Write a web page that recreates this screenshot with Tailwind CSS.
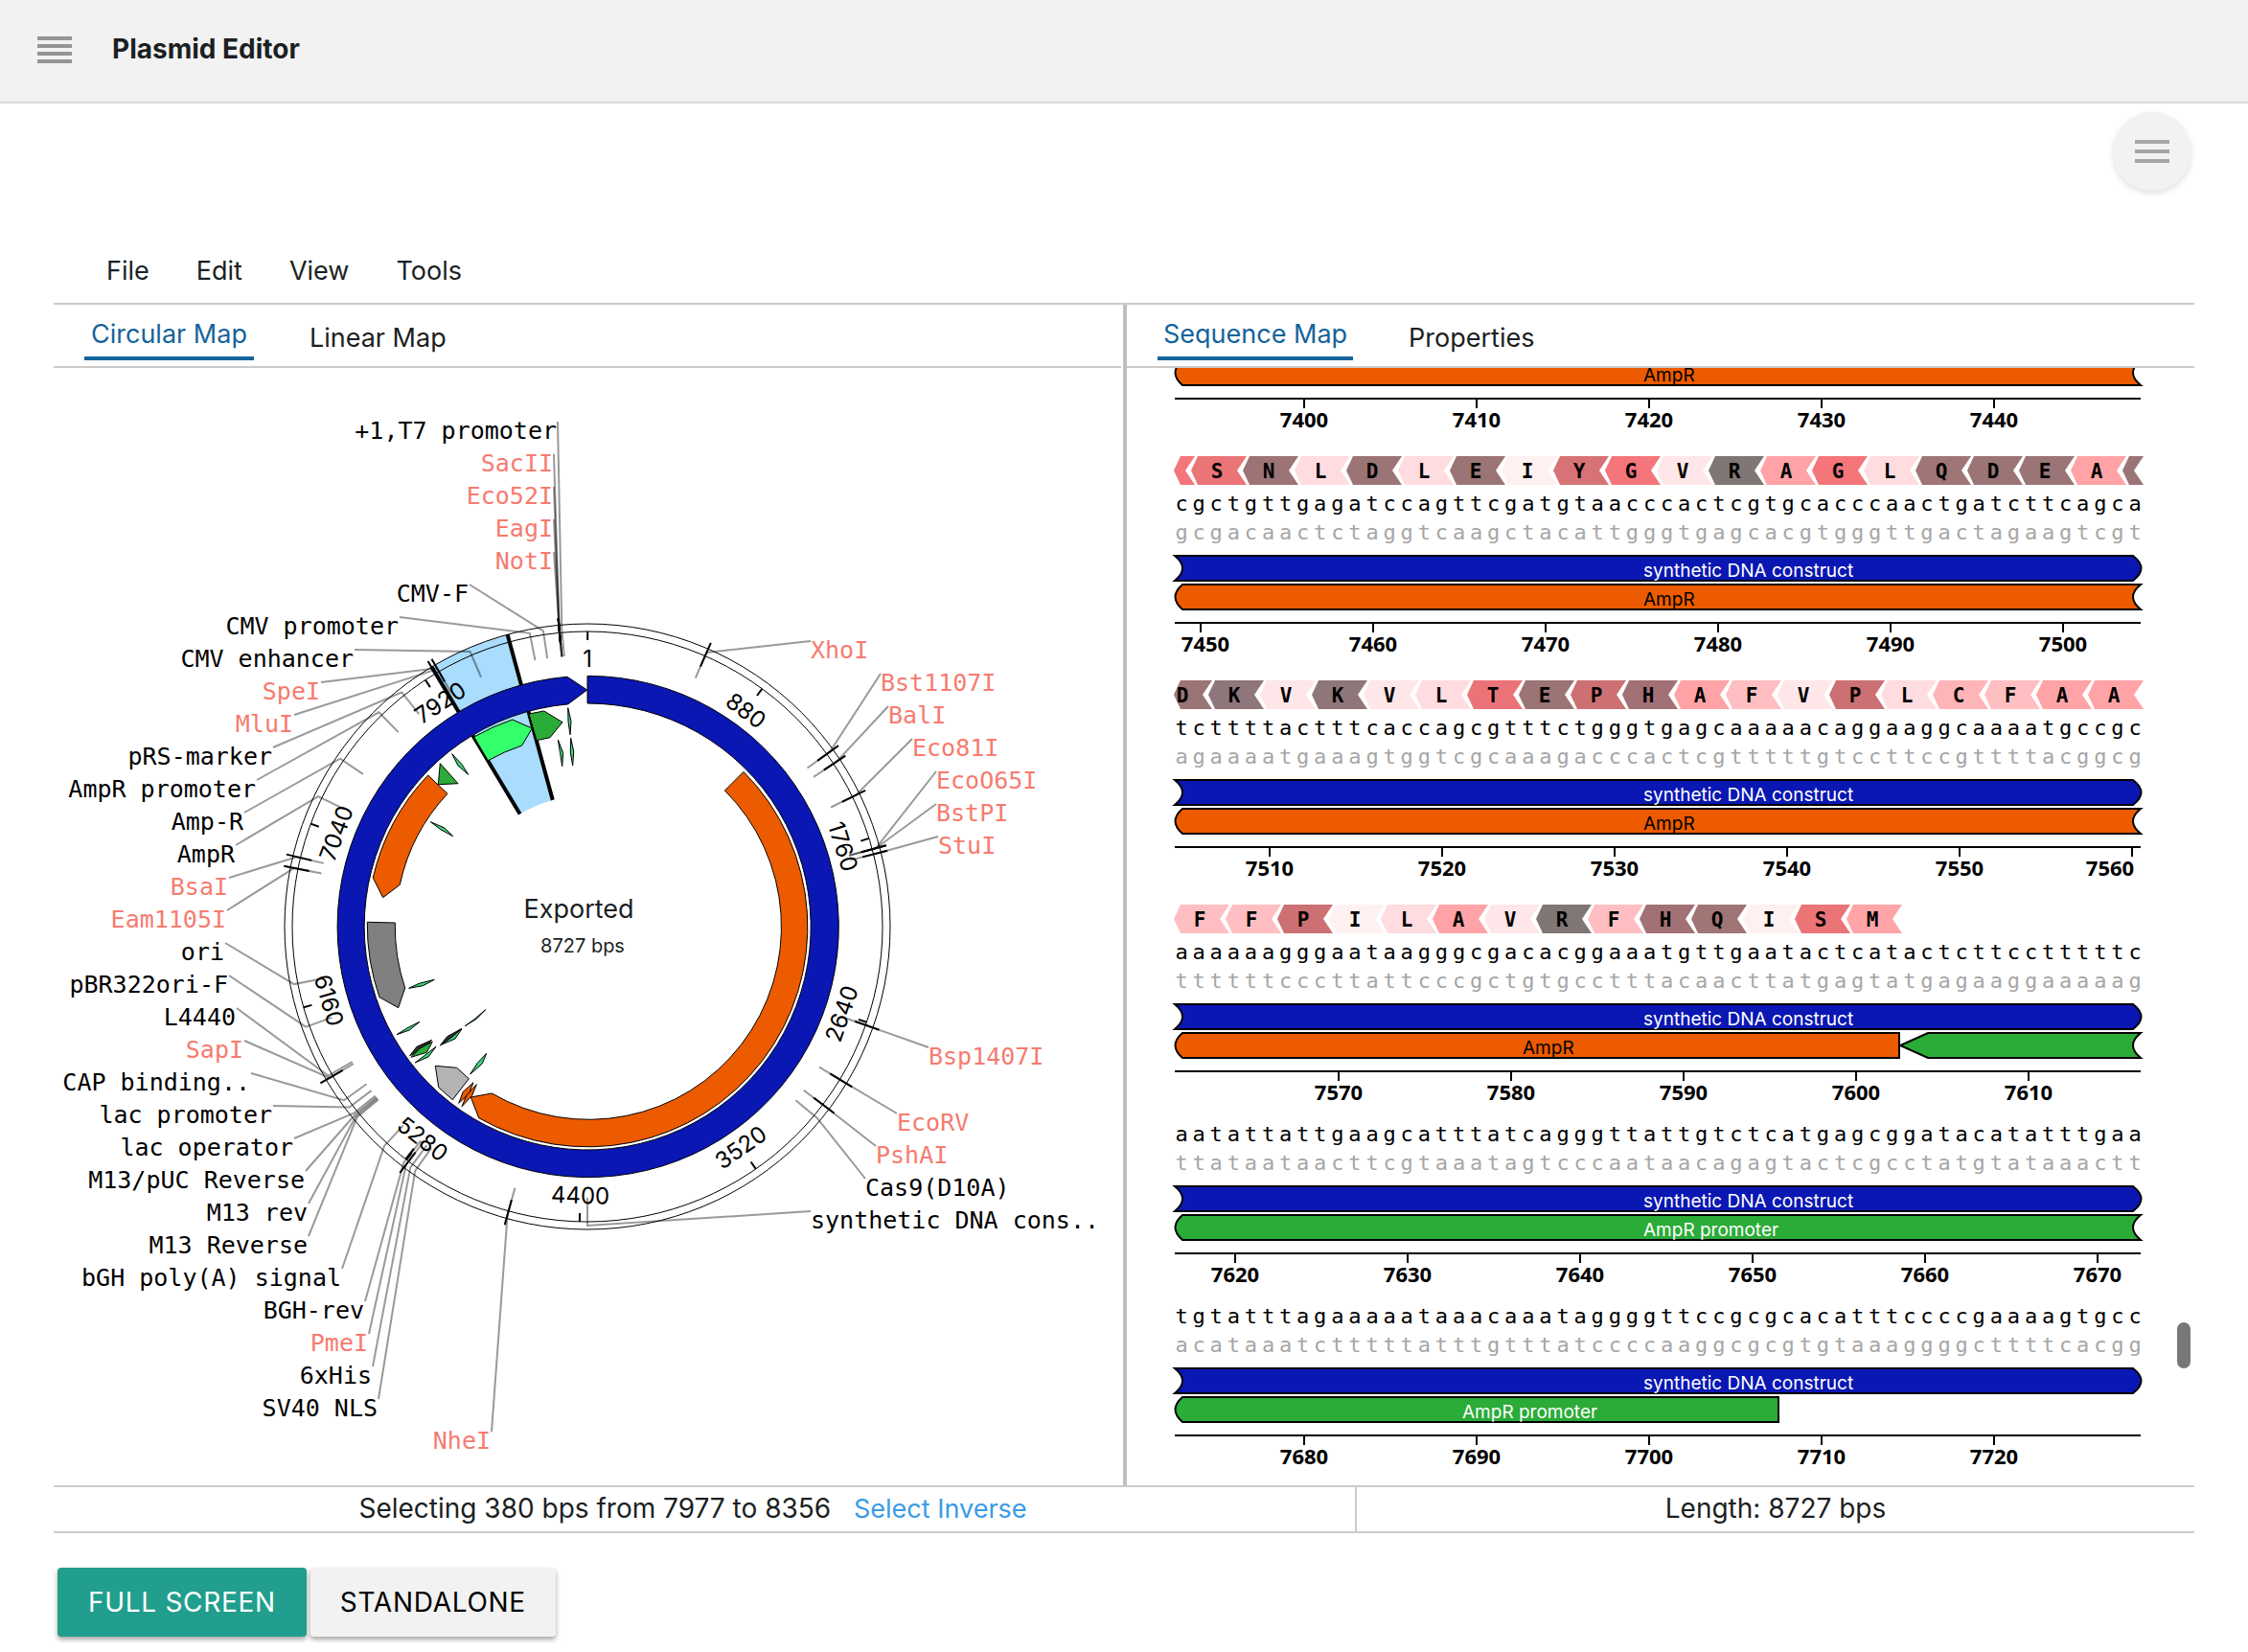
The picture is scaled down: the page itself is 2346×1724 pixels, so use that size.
<!DOCTYPE html>
<html lang="en">
<head>
  <meta charset="UTF-8">
  <meta name="viewport" content="width=device-width, initial-scale=1.0">
  <script src="https://cdn.jsdelivr.net/npm/@tailwindcss/browser@4"></script>
  <title>Plasmid Editor</title>
</head>
<body class="bg-white text-[#1b1f23] text-[27px] leading-[34px] font-['Inter','Liberation_Sans',sans-serif]">
  <header class="flex items-center gap-[42px] h-27 pl-[39px] bg-[#f2f2f2] border-b-2 border-[#d9d9d9]">
    <button type="button" aria-label="Toggle navigation" class="pb-0.5">
      <svg class="block w-9 h-7" viewBox="0 0 36 28" fill="#949494">
        <rect width="36" height="4"/><rect y="8" width="36" height="4"/><rect y="16" width="36" height="4"/><rect y="24" width="36" height="4"/>
      </svg>
    </button>
    <h1 class="text-[28px] font-bold pb-1">Plasmid Editor</h1>
  </header>

  <main class="px-14 pb-4">
    <div class="flex justify-end pt-[9px] pr-[3px]">
      <button type="button" aria-label="Open menu" class="flex items-center justify-center size-[82px] rounded-full bg-[#f2f2f2] shadow-[0_3px_6px_rgba(0,0,0,0.12)]">
        <svg class="w-9 h-6" viewBox="0 0 36 24" fill="#a6a6a6">
          <rect width="36" height="4"/><rect y="10" width="36" height="4"/><rect y="20" width="36" height="4"/>
        </svg>
      </button>
    </div>

    <nav class="flex gap-[49px] pt-[67px] pb-4 pl-[55px]">
      <button type="button">File</button>
      <button type="button">Edit</button>
      <button type="button">View</button>
      <button type="button">Tools</button>
    </nav>

    <!-- Editor panels -->
    <div class="flex border-y-2 border-[#cbcbcb]">
      <section class="flex flex-col flex-1 min-w-0">
        <div class="flex items-start gap-[58px] h-[66px] pt-[14px] pl-8 border-b-2 border-[#cbcbcb]">
          <button type="button" class="px-[7px] pb-[6px] border-b-4 border-[#14639b] text-[#14639b]">Circular Map</button>
          <button type="button" class="mt-1">Linear Map</button>
        </div>
        <svg id="circular" class="block w-full font-['DejaVu_Sans_Mono','Liberation_Mono',monospace]" viewBox="56 384 1114 1166" font-size="25"></svg>
      </section>

      <div class="w-1 ml-0.5 bg-[#bfbfbf]"></div>

      <section class="relative flex flex-col flex-1 min-w-0">
        <div class="flex items-start gap-[58px] h-[66px] pt-[14px] pl-8 border-b-2 border-[#cbcbcb]">
          <button type="button" class="px-[6px] pb-[6px] border-b-4 border-[#14639b] text-[#14639b]">Sequence Map</button>
          <button type="button" class="mt-1">Properties</button>
        </div>
        <div id="sequence" class="flex flex-col justify-end h-0 grow pb-[6px] overflow-hidden"></div>
        <div class="absolute right-1 bottom-[122px] w-[14px] h-12 rounded-full bg-[#777777]"></div>
      </section>
    </div>

    <div class="grid grid-cols-[1358fr_876fr] h-12 text-center text-[28px] border-b-2 border-[#cbcbcb]">
      <div class="pt-[5px] pr-6">
        Selecting 380 bps from 7977 to 8356
        <a href="#" class="ml-4 text-[27px] text-[#3a9be6]">Select Inverse</a>
      </div>
      <div class="pt-[5px] border-l-2 border-[#cbcbcb]">Length: 8727 bps</div>
    </div>

    <div class="flex gap-1 pt-9 pl-1 text-[28px]">
      <button type="button" class="h-18 px-8 rounded-sm bg-[#219e8d] text-white tracking-wide shadow-[0_3px_5px_rgba(0,0,0,0.35)]">FULL SCREEN</button>
      <button type="button" class="h-18 px-[31px] rounded-sm bg-[#f2f2f2] text-black tracking-wide shadow-[0_3px_5px_rgba(0,0,0,0.35)]">STANDALONE</button>
    </div>
  </main>

  <script>
    // ---------- Circular map ----------
    const CX = 613, CY = 967, TOTAL = 8727;

    function polar(deg, r) {
      const a = deg * Math.PI / 180;
      return (CX + r * Math.sin(a)).toFixed(1) + ' ' + (CY - r * Math.cos(a)).toFixed(1);
    }

    function bpAngle(bp) {
      return bp / TOTAL * 360;
    }

    const labelHeight = 34;
    const CUT = '#f67b6f', FEATURE = '#000';

    // [text, angle, x of the text edge, colour]
    const leftLabels = [
      ['+1,T7 promoter', -4.9, 581, FEATURE],
      ['SacII', -5.4, 577, CUT],
      ['Eco52I', -5.4, 577, CUT],
      ['EagI', -5.4, 577, CUT],
      ['NotI', -5.4, 577, CUT],
      ['CMV-F', -8.5, 489, FEATURE],
      ['CMV promoter', -11.1, 416, FEATURE],
      ['CMV enhancer', -23.1, 369, FEATURE],
      ['SpeI', -30.2, 334, CUT],
      ['MluI', -31, 306, CUT],
      ['pRS-marker', -38.4, 284, FEATURE],
      ['AmpR promoter', -44.2, 267, FEATURE],
      ['Amp-R', -55.8, 254, FEATURE],
      ['AmpR', -64.2, 245, FEATURE],
      ['BsaI', -76.5, 238, CUT],
      ['Eam1105I', -78.7, 236, CUT],
      ['ori', -101.1, 234, FEATURE],
      ['pBR322ori-F', -109.6, 238, FEATURE],
      ['L4440', -119.9, 246, FEATURE],
      ['SapI', -120.4, 254, CUT],
      ['CAP binding..', -125.5, 261, FEATURE],
      ['lac promoter', -127.2, 284, FEATURE],
      ['lac operator', -128.6, 306, FEATURE],
      ['M13/pUC Reverse', -129, 318, FEATURE],
      ['M13 rev', -129.3, 321, FEATURE],
      ['M13 Reverse', -129.6, 321, FEATURE],
      ['bGH poly(A) signal', -137.2, 356, FEATURE],
      ['BGH-rev', -142.1, 380, FEATURE],
      ['PmeI', -142.7, 384, CUT],
      ['6xHis', -143.7, 388, FEATURE],
      ['SV40 NLS', -144.8, 394, FEATURE],
      ['NheI', -164.5, 512, CUT]
    ];
    const rightLabels = [
      ['XhoI', 23.5, 846, 687, CUT],
      ['Bst1107I', 54.2, 919, 721, CUT],
      ['BalI', 56.5, 927, 755, CUT],
      ['Eco81I', 63.9, 952, 789, CUT],
      ['EcoO65I', 74.8, 977, 823, CUT],
      ['BstPI', 74.8, 977, 857, CUT],
      ['StuI', 75.8, 979, 891, CUT],
      ['Bsp1407I', 109.5, 969, 1111, CUT],
      ['EcoRV', 121.2, 936, 1180, CUT],
      ['PshAI', 127.1, 914, 1214, CUT],
      ['Cas9(D10A)', 129.8, 903, 1248, FEATURE],
      ['synthetic DNA cons..', 180, 846, 1282, FEATURE]
    ];

    let leaders = '', cuts = '', labels = '';

    function addLabel(text, angle, x, y, color, side) {
      const lx = side === 'end' ? x + 1 : x;
      leaders += `<path d="M${lx} ${y - 18}L${polar(angle, 312)}L${polar(angle, 283)}"/>`;
      if (color === CUT) cuts += `<path d="M${polar(angle, 323)}L${polar(angle, 296)}"/>`;
      labels += `<text x="${x}" y="${y}" text-anchor="${side}" fill="${color}">${text}</text>`;
    }
    leftLabels.forEach(([text, angle, x, color], i) => addLabel(text, angle, x, 458 + i * labelHeight, color, 'end'));
    rightLabels.forEach(([text, angle, x, y, color]) => addLabel(text, angle, x, y, color, 'start'));

    let ticks = '', tickLabels = '';
    [1, 880, 1760, 2640, 3520, 4400, 5280, 6160, 7040, 7920].forEach(bp => {
      const a = bpAngle(bp);
      const [x, y] = polar(a, 280).split(' ');
      const turn = a > 90 && a < 270 ? a - 180 : a;
      ticks += `<path d="M${polar(a, 308)}L${polar(a, 299)}"/>`;
      tickLabels += `<text transform="translate(${x} ${y}) rotate(${turn.toFixed(1)})" y="9" text-anchor="middle">${bp}</text>`;
    });

    const selFrom = bpAngle(7977), selTo = bpAngle(8356);

    // Short annotations on the inner tracks
    const slivers = [
      ['#3fd17a', '592.7 738.7 596 752.7 595 766.7 593 753.3'],
      ['#3fd17a', '582.3 772 587.7 785.7 586.7 799.7 584.7 786.7'],
      ['#3fd17a', '595.7 770.3 598.7 784 597.7 799 595.3 785.3'],
      ['#3fd17a', '471.7 786.7 481.7 797.3 488.7 808.3 478 799'],
      ['#3fd17a', '449.3 857.7 464 864 472.7 872.7 459.3 865.3'],
      ['#3fd17a', '426.7 1031.3 437.3 1026.3 453.3 1022.3 441.3 1028.7'],
      ['#3fd17a', '414 1079.7 424.7 1073 438 1066.3 427.3 1075'],
      ['#2b2f33', '427.7 1101.7 435 1092.3 450.7 1085.3 441.7 1094.3'],
      ['#2bab38', '429 1103.3 438.3 1094 451.3 1087 445.3 1098.3'],
      ['#3fd17a', '433.3 1109 445 1100 455 1092.3 447.3 1102.7'],
      ['#3fd17a', '461 1090 473 1080 481.7 1074 475 1084'],
      ['#2b2f33', '459.3 1091 466.7 1081.7 482 1073.3 472 1082'],
      ['#3fd17a', '485.3 1070.7 494.3 1064.3 506.7 1053.7 497.3 1063.3'],
      ['#3fd17a', '490.7 1121 498.3 1109.3 507.7 1099.3 503.3 1110'],
      ['#ec5b00', '478.7 1151.3 483.3 1139.3 494 1129.7 489.3 1141.7'],
      ['#ec5b00', '482 1154.7 486.7 1143.3 497.3 1131.7 492.7 1143.3']
    ];

    document.getElementById('circular').innerHTML = `
      <path fill="#a9dcfd" d="M${polar(selFrom, 316)}A316 316 0 0 1 ${polar(selTo, 316)}L${polar(selTo, 137)}A137 137 0 0 0 ${polar(selFrom, 137)}Z"/>
      <g fill="none" stroke="#000">
        <circle cx="${CX}" cy="${CY}" r="316"/>
        <circle cx="${CX}" cy="${CY}" r="308"/>
      </g>
      <g stroke="#000" stroke-width="2">${ticks}</g>
      <g fill="none" stroke="#000" stroke-opacity="0.4" stroke-width="2">${leaders}</g>
      <g class="font-['Inter','Liberation_Sans',sans-serif]" font-size="24">${tickLabels}</g>
      <g stroke="#000" stroke-width="2">${cuts}<path d="M${polar(-142, 308)}L${polar(-142, 294)}"/></g>
      <g stroke="#000" stroke-width="4">
        <path d="M${polar(selFrom, 316)}L${polar(selFrom, 137)}"/>
        <path d="M${polar(selTo, 316)}L${polar(selTo, 137)}"/>
      </g>
      <g stroke="#000">
        <path fill="#0a17b3" d="M613 705.4A261.6 261.6 0 1 1 592 706.3L612.7 720L592.7 734.9A233 233 0 1 0 613 734Z"/>
        <path fill="#ec5b00" d="M776 805.4A229.5 229.5 0 0 1 499.7 1166.7L491.3 1145L513.3 1141A201 201 0 0 0 756.4 825Z"/>
        <path fill="#ec5b00" d="M446.7 809A229.5 229.5 0 0 0 389.3 916L399.7 936.7L417.3 923.3A201 201 0 0 1 467 828.3Z"/>
        <path fill="#808080" d="M383.3 962.3A229.5 229.5 0 0 0 396 1040.7L415.7 1051.7L422.7 1031A201 201 0 0 1 412.3 963Z"/>
        <path fill="#b3b3b3" d="M454.3 1112.3L476.7 1114.3L489.3 1125.7L472.3 1147.7L457.7 1134.7Z"/>
        <path fill="#2bab38" d="M459.3 796.7L478 817.7L457.3 818.7Z"/>
        <path fill="#33ff6b" d="M494.7 769A229.5 229.5 0 0 1 534.7 751L555.3 760L544.7 778A201 201 0 0 0 509.3 793.7Z"/>
        <path fill="#2bab38" d="M552 745L567.7 742L587 753.7L574 769.7L560 772.7Z"/>
        ${slivers.map(([fill, points]) => `<polygon fill="${fill}" points="${points}"/>`).join('')}
      </g>
      ${labels}
      <g class="font-['Inter','Liberation_Sans',sans-serif]" text-anchor="middle" fill="#1b1f23">
        <text x="604" y="958" font-size="27">Exported</text>
        <text x="608" y="994" font-size="20">8727 bps</text>
      </g>`;

    // ---------- Sequence map ----------
    const CHAR = 18, PER_ROW = 56, LEFT = 50, RIGHT = LEFT + CHAR * PER_ROW;
    const pair = { a: 't', t: 'a', g: 'c', c: 'g' };
    const aaColors = {
      A: '#ffa3a7', C: '#ffb5b8', D: '#9b7475', E: '#9b7475', F: '#ffbfc2', G: '#f4767b', H: '#a27175',
      I: '#fff0f1', K: '#8f767a', L: '#ffdcdf', M: '#ffa5a8', N: '#9c7476', P: '#cc7073', Q: '#a07576',
      R: '#7f7675', S: '#eb7477', T: '#eb7377', V: '#ffe6e9', Y: '#d77376'
    };
    const ORANGE = '#ec5b00', GREEN = '#2bab38';

    // aaShift: how many bases of the first codon stand on the row before
    const rows = [
      { start: 7393, bars: [{ name: 'AmpR', fill: ORANGE, text: '#000', tx: 539 }] },
      { start: 7449, seq: 'cgctgttgagatccagttcgatgtaacccactcgtgcacccaactgatcttcagca', aa: 'GSNLDLEIYGVRAGLQDEAD', aaShift: 2,
        bars: [{ name: 'AmpR', fill: ORANGE, text: '#000', tx: 539 }] },
      { start: 7505, seq: 'tcttttactttcaccagcgtttctgggtgagcaaaaacaggaaggcaaaatgccgc', aa: 'DKVKVLTEPHAFVPLCFAA', aaShift: 1,
        bars: [{ name: 'AmpR', fill: ORANGE, text: '#000', tx: 539 }] },
      { start: 7561, seq: 'aaaaaagggaataagggcgacacggaaatgttgaatactcatactcttcctttttc', aa: 'FFPILAVRFHQISM', aaShift: 0,
        bars: [{ name: 'AmpR', fill: ORANGE, text: '#000', tx: 413, to: 42 }, { name: '', fill: GREEN, from: 42 }] },
      { start: 7617, seq: 'aatattattgaagcatttatcagggttattgtctcatgagcggatacatatttgaa',
        bars: [{ name: 'AmpR promoter', fill: GREEN, text: '#fff', tx: 539 }] },
      { start: 7673, seq: 'tgtatttagaaaaataaacaaataggggttccgcgcacatttccccgaaaagtgcc',
        bars: [{ name: 'AmpR promoter', fill: GREEN, text: '#fff', tx: 350, to: 35 }] }
    ];

    function strand(seq, y, fill) {
      const step = (RIGHT - LEFT - 13) / (PER_ROW - 1);
      const xs = [...seq].map((c, i) => (LEFT + 7 + i * step).toFixed(1)).join(' ');
      return `<text x="${xs}" y="${y}" fill="${fill}" text-anchor="middle" font-size="22">${seq}</text>`;
    }

    function aminoAcids(row, y) {
      return [...row.aa].map((letter, i) => {
        const cell = LEFT + (i * 3 - row.aaShift) * CHAR;
        const from = Math.max(cell, LEFT), to = Math.min(cell + 3 * CHAR, RIGHT);
        const shape = `<path fill="${aaColors[letter]}" d="M${from - 1} ${y + 15}L${from + 6} ${y}H${to + 3}L${to - 7} ${y + 15}L${to + 3} ${y + 30}H${from + 6}Z"/>`;
        if (to - from < 2 * CHAR) return shape;
        return shape + `<text x="${cell + 26}" y="${y + 23}" text-anchor="middle" font-size="21" font-weight="700">${letter}</text>`;
      }).join('');
    }

    function syntheticBar(y) {
      return `<path fill="#0a17b3" stroke="#000" stroke-width="2" d="M${LEFT} ${y}H${RIGHT - 8}Q${RIGHT + 9} ${y + 13} ${RIGHT - 8} ${y + 26}H${LEFT}Q${LEFT + 16} ${y + 13} ${LEFT} ${y}Z"/>
        <text x="539" y="${y + 22}" fill="#fff" class="font-['Inter','Liberation_Sans',sans-serif]" font-size="19">synthetic DNA construct</text>`;
    }

    // Bar of a feature on the reverse strand, pointing left
    function bar(b, y) {
      const x2 = LEFT + (b.to || 0) * CHAR;
      const right = b.to ? `H${x2}V${y + 26}` : `H${RIGHT}Q${RIGHT - 16} ${y + 13} ${RIGHT} ${y + 26}`;
      const x1 = LEFT + (b.from || 0) * CHAR;
      const left = b.from
        ? `M${x1 + 30} ${y}${right}H${x1 + 30}L${x1 + 1} ${y + 13}Z`
        : `M${x1 + 8} ${y}${right}H${x1 + 8}Q${x1 - 7} ${y + 13} ${x1 + 8} ${y}Z`;
      return `<path fill="${b.fill}" stroke="#000" stroke-width="2" d="${left}"/>` +
        (b.name ? `<text x="${b.tx}" y="${y + 22}" fill="${b.text}" class="font-['Inter','Liberation_Sans',sans-serif]" font-size="19">${b.name}</text>` : '');
    }

    function axis(row, y) {
      let out = `<path stroke="#000" stroke-width="2" d="M${LEFT} ${y}H${RIGHT}"/>`;
      for (let bp = Math.ceil(row.start / 10) * 10; bp < row.start + PER_ROW; bp += 10) {
        const x = LEFT + (bp - row.start + 0.5) * CHAR;
        const tx = Math.min(Math.max(x, LEFT + 32), RIGHT - 32);
        out += `<path stroke="#000" stroke-width="2" d="M${x} ${y}v10"/>` +
          `<text x="${tx}" y="${y + 30}" text-anchor="middle" font-size="22" font-weight="700" class="font-['Noto_Sans','Open_Sans',sans-serif]">${bp}</text>`;
      }
      return out;
    }

    document.getElementById('sequence').innerHTML = rows.map(row => {
      const h = row.aa ? 234 : 190;
      const a = h - 46;
      return `<svg class="block w-full shrink-0 font-['DejaVu_Sans_Mono','Liberation_Mono',monospace]" viewBox="0 0 1114 ${h}">
        ${row.aa ? aminoAcids(row, a - 174) : ''}
        ${row.seq ? strand(row.seq, a - 117, '#000') + strand([...row.seq].map(c => pair[c]).join(''), a - 87, '#a6a6a6') + syntheticBar(a - 70) : ''}
        ${row.bars.map(b => bar(b, a - 40)).join('')}
        ${axis(row, a)}
      </svg>`;
    }).join('');
  </script>
</body>
</html>
